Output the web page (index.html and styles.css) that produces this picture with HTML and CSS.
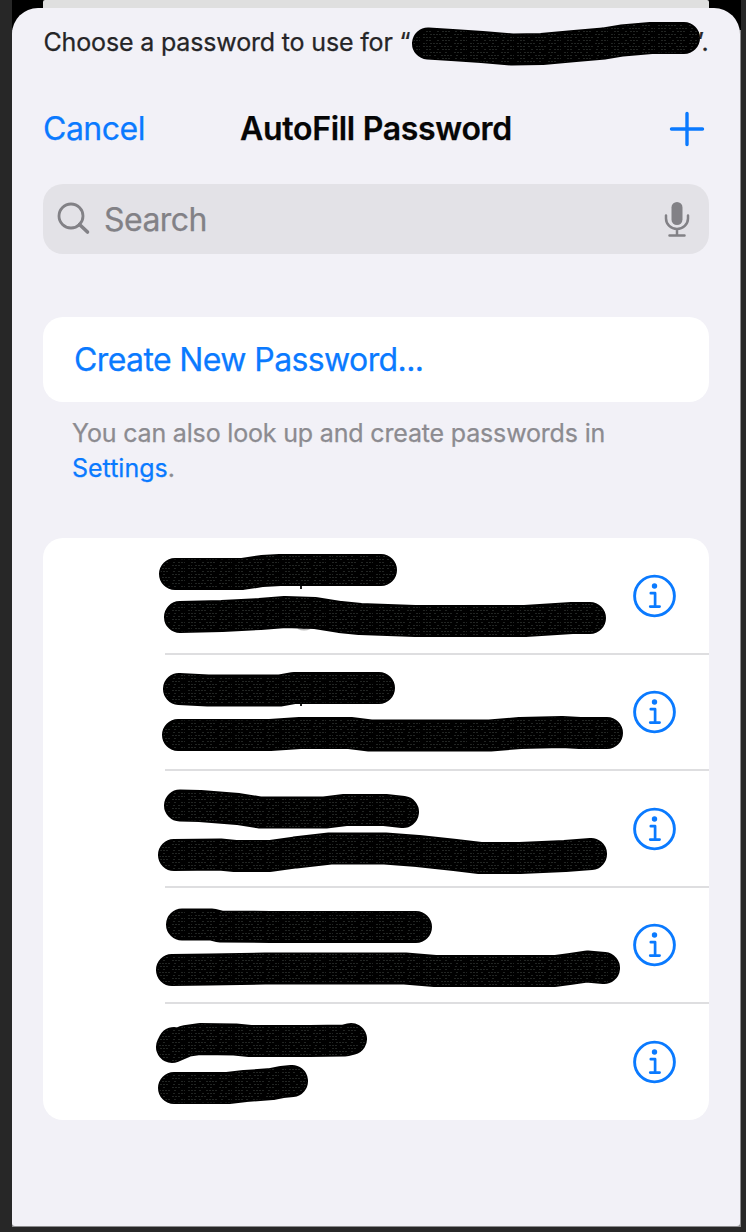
FILE: index.html
```html
<!DOCTYPE html>
<html lang="en">
<head>
<meta charset="utf-8">
<title>AutoFill Password</title>
<link rel="stylesheet" href="styles.css">
</head>
<body>
<svg class="defs" width="0" height="0" aria-hidden="true">
  <defs>
    <pattern id="grain" width="47" height="9" patternUnits="userSpaceOnUse">
      <path d="M0 1.5h9m2 0h3m4 0h12m3 0h2m5 0h4M3 4.500h6m5 0h2m3 0h8m5 0h3m2 0h7M0 7.500h4m3 0h11m4 0h3m6 0h9" stroke="#2b2e2c" stroke-width=".8" stroke-dasharray="2 1"/>
    </pattern>
    <symbol id="info" viewBox="0 0 44 44">
      <circle cx="22.500" cy="22" r="19.900" fill="none" stroke="#0a7aff" stroke-width="2.900"/>
      <circle cx="22.500" cy="12" r="2.700" fill="#0a7aff"/>
      <path d="M18.800 19.200h4.300v13.200M18.200 32.600h9.400" fill="none" stroke="#0a7aff" stroke-width="2.700" stroke-linecap="round" stroke-linejoin="round"/>
    </symbol>
  </defs>
</svg>
<div class="screen">
  <div class="behind"></div>
  <main class="sheet">
    <div class="prompt">
      <span class="prompt-text">Choose a password to use for “</span>
      <svg class="prompt-mark" width="290" height="48" viewBox="411 18 290 48">
        <g class="ink"><path id="p0" d="M428 43.500L452 45L482 47L512 49.500L542 49L575 46L604 43.500L622 40.500L651 38L684 38"/><use href="#p0" class="grain"/></g>
      </svg>
      <span class="prompt-end">”.</span>
    </div>
    <header class="nav">
      <a class="cancel">Cancel</a>
      <h1>AutoFill Password</h1>
      <svg class="plus" width="36" height="36" viewBox="0 0 36 36"><path d="M18 2.500v31M2.500 18h31"/></svg>
    </header>
    <div class="search">
      <svg width="34" height="34" viewBox="0 0 34 34" class="glass"><circle cx="14" cy="14" r="12"/><path d="M22.500 22.500l8 7.500" class="handle"/></svg>
      <span class="placeholder">Search</span>
      <svg width="26" height="36" viewBox="0 0 26 36" class="mic"><rect x="7.500" y="1" width="11" height="23" rx="5.500"/><path d="M2 14.500v3a11 10.500 0 0 0 22 0v-3M13 28v6M5.500 34.500h15"/></svg>
    </div>
    <div class="card create"><a>Create New Password...</a></div>
    <p class="note"><span class="note-line">You can also look up and create passwords in</span><br><a>Settings</a>.</p>
    <div class="card list">
      <div class="row">
        <svg class="marks" width="480" height="116" viewBox="152 538 480 116">
          <path d="M301 584v5" stroke="#222" stroke-width="2"/><path d="M298 628q6 3 12 0" stroke="#bbb" stroke-width="2"/>
          <g class="ink"><path id="a1" d="M175 574H242L262 571L280 570H381"/><path id="b1" d="M180 617L222 616L260 614L285 612L315 613L340 617L360 619L415 621H525L572 618H590"/><use href="#a1" class="grain"/><use href="#b1" class="grain"/></g>
        </svg>
        <svg class="info"><use href="#info"/></svg>
      </div>
      <div class="row">
        <svg class="marks" width="480" height="116" viewBox="152 655 480 116">
          <path d="M301 702v5" stroke="#222" stroke-width="2"/>
          <g class="ink"><path id="a2" d="M179 690L208 691.500H280L294 689H379"/><path id="b2" d="M178 736H270L300 734H350L370 736.500H490L520 734L562 733L580 734H607"/><use href="#a2" class="grain"/><use href="#b2" class="grain"/></g>
        </svg>
        <svg class="info"><use href="#info"/></svg>
      </div>
      <div class="row">
        <svg class="marks" width="480" height="116" viewBox="152 771 480 116">
          <g class="ink"><path id="a3" d="M180 805.500L200 806L238 809L260 812.500H325L345 810H385L403 812"/><path id="b3" d="M174 855L220 854.500L235 856H270L295 852.500L330 848.500H385L418 851L455 855L480 858H520L565 856L591 854"/><use href="#a3" class="grain"/><use href="#b3" class="grain"/></g>
        </svg>
        <svg class="info"><use href="#info"/></svg>
      </div>
      <div class="row">
        <svg class="marks" width="480" height="116" viewBox="152 888 480 116">
          <g class="ink"><path id="a4" d="M182 925.500H212L220 927.500L270 928H416"/><path id="b4" d="M172 971L210 970.500L265 969.500H405L435 972H555L570 970L587 967.500L604 969"/><use href="#a4" class="grain"/><use href="#b4" class="grain"/></g>
        </svg>
        <svg class="info"><use href="#info"/></svg>
      </div>
      <div class="row">
        <svg class="marks" width="480" height="116" viewBox="152 1004 480 116">
          <g class="ink"><path id="a5" d="M174 1043L172 1047L186 1041L200 1039L235 1039.500L250 1041H310L345 1040.500L351 1039"/><path id="b5" d="M174 1088H228L245 1086L272 1084L282 1082L292 1081"/><use href="#a5" class="grain"/><use href="#b5" class="grain"/></g>
        </svg>
        <svg class="info"><use href="#info"/></svg>
      </div>
    </div>
  </main>
</div>
</body>
</html>
```
FILE: styles.css
```css
* { box-sizing: border-box; }
body { margin: 0; background: #272727; font-family: Inter, "Liberation Sans", sans-serif; -webkit-text-stroke: .25px currentColor; }
svg { display: block; flex: none; }
.defs { position: absolute; }
.screen { width: 729px; height: 1227px; margin-left: 11.5px; background: linear-gradient(#000 30px, #8b8b8d 30px); }
.behind { height: 7.5px; margin: 0 31.5px; background: #dfdfdf; border-radius: 2px 2px 0 0; }
.sheet { height: 1218.5px; margin: 0 .5px; padding: 0 31px; background: #f2f1f7; border-radius: 26px 26px 3px 3px; overflow: hidden; }
.prompt { display: flex; height: 69px; padding-top: 10px; color: #252527; font-size: 25px; line-height: 48px; white-space: nowrap; }
.prompt-text { width: 368px; letter-spacing: -.16px; padding-left: .5px; }
.prompt-mark { position: relative; z-index: 1; }
.prompt-end { margin-left: -8px; }
.ink { fill: none; stroke: #000; stroke-width: 32; stroke-linecap: round; stroke-linejoin: round; }
.grain { stroke: url(#grain); stroke-width: 29; }
.nav { display: grid; grid-template-columns: 1fr auto 1fr; align-items: center; height: 104px; font-size: 32px; }
.nav h1 { margin: 0; font-size: 32px; font-weight: 600; letter-spacing: -.3px; color: #060606; white-space: nowrap; }
.cancel { letter-spacing: -.5px; }
a { color: #0a7aff; }
.plus { justify-self: end; margin-right: 4px; fill: none; stroke: #0a7aff; stroke-width: 3.4; stroke-linecap: round; }
.search { display: flex; align-items: center; height: 70px; margin-top: 3.5px; padding: 0 19px 0 14px; border-radius: 20px; background: #e3e2e7; color: #828186; font-size: 32px; }
.glass { fill: none; stroke: #828186; stroke-width: 2.8; stroke-linecap: round; }
.handle { stroke-width: 3.6; }
.placeholder { flex: 1; margin-left: 13px; letter-spacing: -.55px; }
.mic { fill: none; stroke: #828186; stroke-width: 2.5; stroke-linecap: round; }
.mic rect { fill: #828186; stroke: none; }
.card { background: #fff; border-radius: 20px; }
.create { display: flex; align-items: center; height: 85px; margin-top: 63px; padding-left: 31px; font-size: 32px; letter-spacing: -.61px; }
.note { margin: 14px 0 0 29px; height: 121.5px; color: #8c8b90; font-size: 25px; line-height: 35px; white-space: nowrap; }
.note-line { letter-spacing: -.17px; }
.list { height: 582.5px; overflow: hidden; }
.row { position: relative; display: flex; align-items: center; height: 116.5px; padding-left: 109px; }
.row + .row::before { content: ""; position: absolute; top: -1.5px; left: 122px; right: 0; height: 2px; background: #dedee0; }
.info { width: 44px; height: 44px; }
```
